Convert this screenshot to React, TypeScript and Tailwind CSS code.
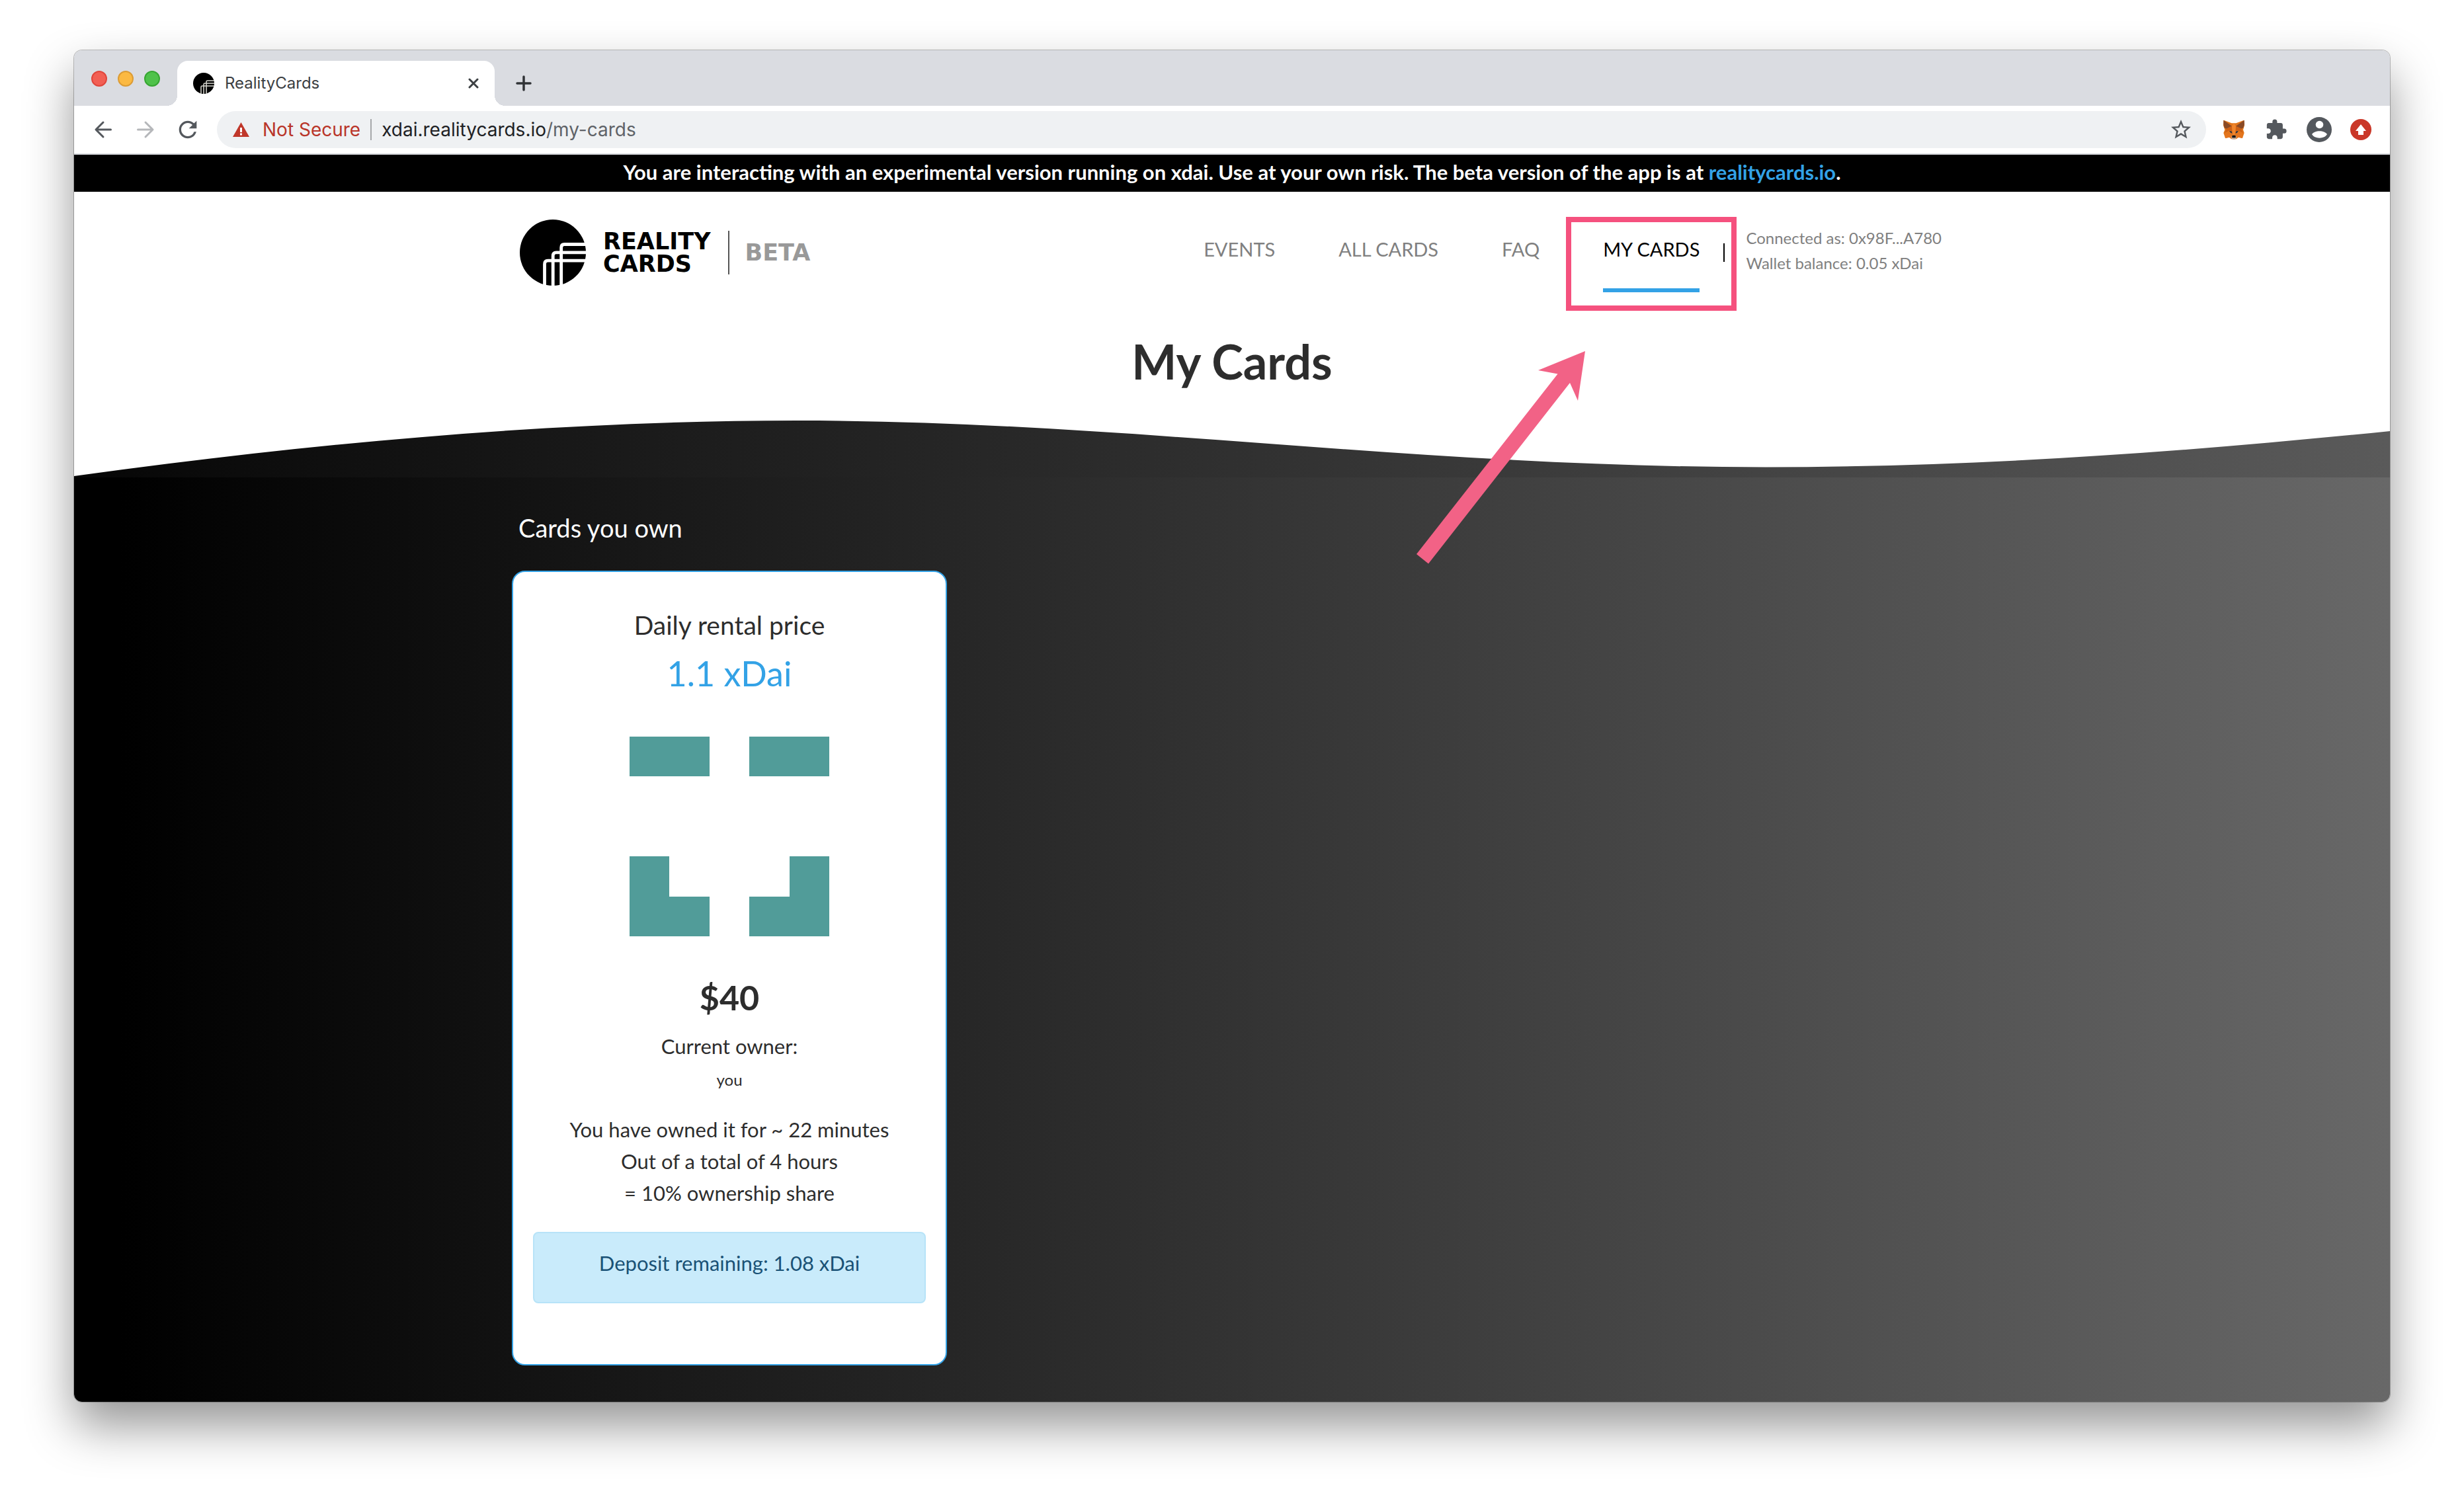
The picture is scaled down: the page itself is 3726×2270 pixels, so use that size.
import type { ReactNode } from 'react';
import { MdExtension, MdRefresh, MdStarBorder } from 'react-icons/md';

function LogoMark({ className, stroke }: { className: string; stroke: string }) {
  return (
    <svg viewBox="0 0 100 100" className={className} aria-hidden="true">
      <circle cx="50" cy="50" r="50" fill="#000" />
      <g fill="none" stroke={stroke} strokeWidth="4.8">
        <path d="M101 37.5H67.5Q62.7 37.5 62.7 42.5V101" />
        <path d="M101 49.8H55Q50.2 49.8 50.2 55V101" />
        <path d="M101 62.2H42.5Q37.5 62.2 37.5 67.5V101" />
      </g>
    </svg>
  );
}

function Arrow({ flip }: { flip?: boolean }) {
  return (
    <svg viewBox="0 0 28 28" className="size-7" fill="none" stroke="currentColor" strokeWidth="3" strokeLinecap="round" strokeLinejoin="round" aria-hidden="true">
      {flip ? <path d="M2.500 14H24M14 3l11 11-11 11" /> : <path d="M25.500 14H4M14 3L3 14l11 11" />}
    </svg>
  );
}

function Fox() {
  return (
    <svg viewBox="0 0 96 90" className="h-[30px] w-8" aria-hidden="true">
      <path d="M2 2l36 14h20L94 2l2 24-6 20 5 14-8 24-18-4-10 8H37l-10-8-18 4L1 60l6-14-7-20z" fill="#e2761b" />
      <path d="M1 2l38 27-25 12-9-4-4-15zM95 2L57 29l25 12 9-4 5-15z" fill="#8a4a26" />
      <path d="M14 41l25-12 2 28-11-9-24 12zM82 41L57 29l-2 28 11-9 24 12z" fill="#cd6116" />
      <path d="M39 29l9-13 9 13-3 40H42z" fill="#f0852c" />
      <path d="M27 50l11 3 3 9-8-3zM69 50l-11 3-3 9 8-3z" fill="#233447" />
      <path d="M9 84l3-22 20-2 7 20-12 0zM87 84l-3-22-20-2-7 20 12 0z" fill="#e4751f" />
      <path d="M38 76l3-4h14l3 4 1 8-5 5H42l-5-5z" fill="#c0ad9e" />
      <path d="M41 71h14l2 9-3 2H42l-3-2z" fill="#161616" />
    </svg>
  );
}

function IconButton({ label, children, className }: { label: string; children: ReactNode; className: string }) {
  return (
    <button type="button" aria-label={label} className={`flex shrink-0 items-center justify-center ${className}`}>
      {children}
    </button>
  );
}

function TabStrip() {
  return (
    <div className="flex h-[84px] items-end bg-[#dadce1] pl-[26px]">
      <div className="flex gap-4 pb-[29px]">
        <button type="button" aria-label="Close window" className="size-6 rounded-full border-2 border-[#e0463c] bg-[#f25f54]" />
        <button type="button" aria-label="Minimize window" className="size-6 rounded-full border-2 border-[#dc9c35] bg-[#fbb942]" />
        <button type="button" aria-label="Zoom window" className="size-6 rounded-full border-2 border-[#37a632] bg-[#4fc24a]" />
      </div>
      <div className="relative ml-[26px] flex h-[68px] w-[480px] items-center rounded-t-2xl bg-white px-6">
        <span className="absolute bottom-0 -left-4 size-4 bg-[radial-gradient(circle_at_0_0,transparent_16px,#fff_16px)]" />
        <span className="absolute -right-4 bottom-0 size-4 bg-[radial-gradient(circle_at_100%_0,transparent_16px,#fff_16px)]" />
        <LogoMark className="size-8" stroke="#d8d8d0" />
        <span className="ml-4 flex-1 text-[24px] leading-8 text-[#3c4043]">RealityCards</span>
        <IconButton label="Close tab" className="size-4 text-[#3c4043]">
          <svg viewBox="0 0 16 16" className="size-4" stroke="currentColor" strokeWidth="3" strokeLinecap="round">
            <path d="M2 2l12 12M14 2L2 14" />
          </svg>
        </IconButton>
      </div>
      <IconButton label="New tab" className="mb-[22px] ml-8 size-6 text-[#303336]">
        <svg viewBox="0 0 24 24" className="size-6" stroke="currentColor" strokeWidth="3.500" strokeLinecap="round">
          <path d="M12 2v20M2 12h20" />
        </svg>
      </IconButton>
    </div>
  );
}

function Toolbar() {
  return (
    <div className="flex h-[74px] items-center border-b-2 border-[#d6d8dc] bg-white pr-7 pl-[30px] text-[#54585d]">
      <IconButton label="Back" className="size-7"><Arrow /></IconButton>
      <IconButton label="Forward" className="ml-9 size-7 text-[#b5b7ba]"><Arrow flip /></IconButton>
      <IconButton label="Reload" className="ml-[30px] size-10"><MdRefresh className="size-10" /></IconButton>
      <div className="ml-6 flex h-14 flex-1 items-center rounded-full bg-[#eff1f3] pr-5 pl-6 text-[28px] leading-9">
        <svg viewBox="0 0 25 22" className="h-[22px] w-[25px]" aria-hidden="true">
          <path d="M12.500 0L25 22H0z" fill="#c0372a" />
          <path d="M11 8h3v7h-3zM11 16.500h3v3h-3z" fill="#fff" />
        </svg>
        <span className="ml-5 text-[#b93529]">Not Secure</span>
        <span className="mx-[15px] h-8 w-0.5 bg-[#a5a7aa]" />
        <span role="textbox" aria-label="Address" className="flex-1 text-[#5f6368]">
          <span className="text-[#202124]">xdai.realitycards.io</span>/my-cards
        </span>
        <IconButton label="Bookmark" className="size-9"><MdStarBorder className="size-9" /></IconButton>
      </div>
      <IconButton label="MetaMask" className="ml-[26px] h-8 w-8"><Fox /></IconButton>
      <IconButton label="Extensions" className="ml-[30px] size-9"><MdExtension className="size-[34px]" /></IconButton>
      <IconButton label="Profile" className="ml-7 size-[38px]">
        <svg viewBox="0 0 38 38" className="size-[38px]">
          <circle cx="19" cy="19" r="19" fill="currentColor" />
          <circle cx="19.500" cy="11.500" r="5.800" fill="#fff" />
          <path d="M8 26C12 19.500 27 19.500 31 26C27 33.500 12 33.500 8 26z" fill="#fff" />
        </svg>
      </IconButton>
      <IconButton label="Update" className="ml-7 size-8">
        <svg viewBox="0 0 32 32" className="size-8">
          <circle cx="16" cy="16" r="16" fill="#ca3728" />
          <path d="M16 8l8 10h-4v6h-8v-6H8z" fill="#fff" />
        </svg>
      </IconButton>
    </div>
  );
}

function Header() {
  return (
    <header className="mx-auto flex h-[184px] w-full max-w-[2178px] items-center pr-4 pl-3">
      <a href="#home" className="flex items-center text-black">
        <LogoMark className="size-[100px]" stroke="#fff" />
        <span className="ml-[26px] font-['DejaVu_Sans'] text-[35px] leading-[34px] font-bold">
          REALITY
          <br />
          CARDS
        </span>
        <span className="ml-[26px] h-[66px] w-0.5 bg-[#555]" />
        <span className="ml-6 font-['DejaVu_Sans'] text-[35px] leading-[34px] font-bold text-[#999]">BETA</span>
      </a>
      <nav className="ml-auto flex gap-[96px] text-[29px] leading-[42px] text-[#808080]">
        <a href="#events" className="h-[120px] pt-[34px]">EVENTS</a>
        <a href="#cards" className="h-[120px] pt-[34px]">ALL CARDS</a>
        <a href="#faq" className="h-[120px] pt-[34px]">FAQ</a>
        <a href="#my-cards" className="relative h-[120px] border-b-[6px] border-[#33a2e6] pt-[34px] text-black">
          MY CARDS
          <span className="pointer-events-none absolute top-1.5 -right-14 -bottom-[34px] -left-14 border-8 border-[#f5517e]" />
        </a>
      </nav>
      <span className="ml-9 h-7 w-0.5 bg-black" />
      <div className="ml-8 pb-1.5 text-[24px] leading-[38px] text-[#808080]">
        <p>Connected as: 0x98F...A780</p>
        <p>Wallet balance: 0.05 xDai</p>
      </div>
    </header>
  );
}

function Identicon() {
  return (
    <svg viewBox="0 0 5 5" className="mx-auto mt-16 size-[302px]" fill="#519c99" shapeRendering="crispEdges" role="img" aria-label="Card avatar">
      <path d="M0 0h2v1H0zM3 0h2v1H3zM0 3h1v1h1v1H0zM4 3h1v2H3V4h1z" />
    </svg>
  );
}

function OwnedCard() {
  return (
    <article className="mt-[41px] w-[658px] rounded-[20px] border-2 border-[#33a2e6] bg-white px-[30px] pt-14 pb-[92px] text-center text-[31px] leading-[48px] text-[#2d2d2d]">
      <h3 className="text-[39px]">Daily rental price</h3>
      <p className="mt-[17px] text-[52px] leading-[64px] text-[#33a2e6]">1.1 xDai</p>
      <Identicon />
      <h3 className="mt-[60px] text-[52px] leading-[64px] font-bold">$40</h3>
      <p className="mt-[18px]">Current owner:</p>
      <p className="mt-[9px] text-[24px] leading-9">you</p>
      <div className="mt-[33px]">
        <p>You have owned it for ~ 22 minutes</p>
        <p>Out of a total of 4 hours</p>
        <p>= 10% ownership share</p>
      </div>
      <div className="mt-[35px] rounded-lg border-2 border-[#b7e3f8] bg-[#c9ebfb] pt-[21px] pb-[35px] text-[#1a5276]">
        Deposit remaining: 1.08 xDai
      </div>
    </article>
  );
}

function PointerArrow() {
  return (
    <svg viewBox="0 0 260 326" className="pointer-events-none absolute top-[297px] left-1/2 ml-[277px] h-[326px] w-[260px]" aria-hidden="true">
      <path d="M257 0L186 29l29.500 5.500L2 307l18 14.500L234 48l12 27z" fill="#f26286" />
    </svg>
  );
}

export default function App() {
  return (
    <div className="min-h-screen bg-white px-[112px] pt-[76px] pb-[148px] font-[Inter,sans-serif]">
      <div className="overflow-hidden rounded-[12px] shadow-[0_0_0_1px_rgba(0,0,0,0.25),0_36px_72px_rgba(0,0,0,0.42)]">
        <TabStrip />
        <Toolbar />
        <div className="relative bg-white font-[Lato,sans-serif]">
          <p className="bg-black pb-1 text-center text-[31px] leading-[52px] font-bold text-white">
            You are interacting with an experimental version running on xdai. Use at your own risk. The beta version of the app is at{' '}
            <a href="#realitycards" className="text-[#33a2e6]">realitycards.io</a>.
          </p>
          <Header />
          <h1 className="mt-6 text-center text-[72px] leading-[96px] font-bold text-[#2d2d2d]">My Cards</h1>
          <svg viewBox="0 0 3502 92" preserveAspectRatio="none" className="mt-9 block h-[92px] w-full" aria-hidden="true">
            <defs>
              <linearGradient id="wave">
                <stop offset="0" stopColor="#060606" />
                <stop offset="1" stopColor="#5a5a5a" />
              </linearGradient>
            </defs>
            <path d="M0 90C364 40 729 6 1093 6C1580 6 2030 76.500 2558 76.500C2872 76.500 3188 54 3502 22V92H0z" fill="url(#wave)" />
          </svg>
          <main className="bg-[linear-gradient(to_right,#000_2%,#686868)] pt-[52px] pb-[55px]">
            <div className="mx-auto w-full max-w-[2178px]">
              <h2 className="pl-2.5 text-[38px] leading-[48px] text-white">Cards you own</h2>
              <OwnedCard />
            </div>
          </main>
          <PointerArrow />
        </div>
      </div>
    </div>
  );
}
